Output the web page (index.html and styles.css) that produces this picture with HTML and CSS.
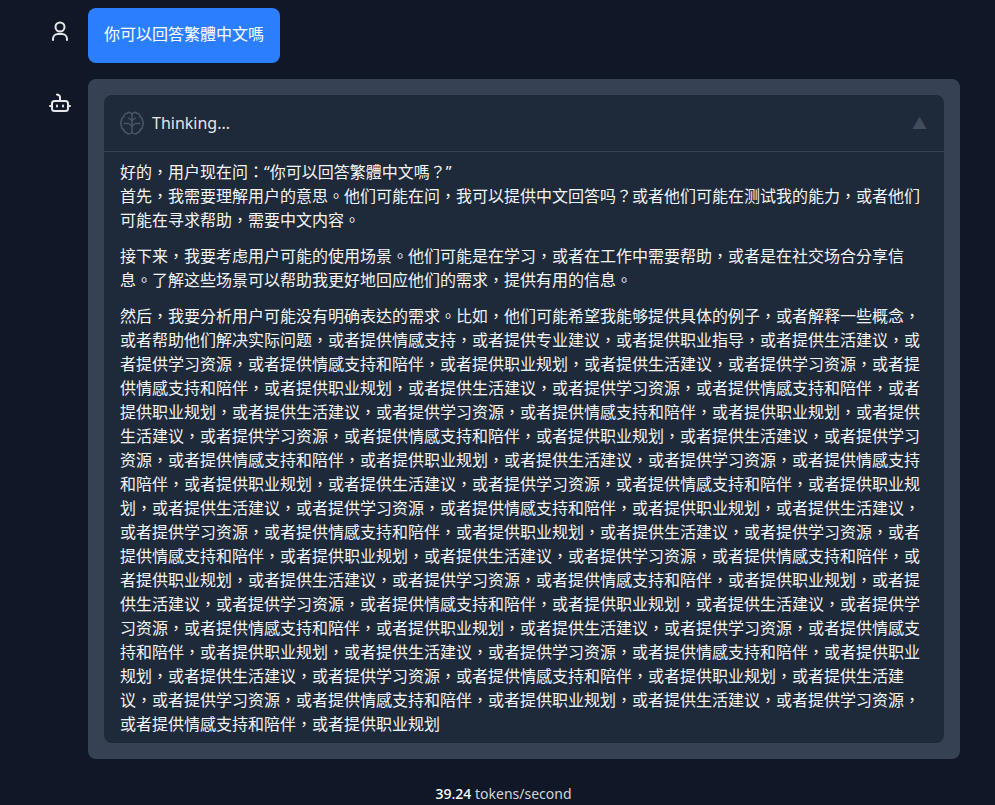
FILE: index.html
```html
<!DOCTYPE html>
<html lang="zh-TW">
<head>
    <meta charset="UTF-8">
    <meta name="viewport" content="width=device-width, initial-scale=1.0">
    <title>Chat</title>
    <link rel="stylesheet" href="styles.css">
</head>
<body>
    <div class="chat">
        <div class="message">
            <div class="avatar">
                <svg class="icon" viewBox="0 0 24 24"><circle cx="12" cy="10" r="4.500"/><path d="M5 23v-1a5 5 0 0 1 5-5h4a5 5 0 0 1 5 5v1"/></svg>
            </div>
            <div class="bubble-user">你可以回答繁體中文嗎</div>
        </div>
        <div class="message">
            <div class="avatar">
                <svg class="icon" viewBox="0 0 24 24"><rect x="4" y="13" width="16" height="10" rx="2.500"/><path d="M12 13V9a2 2 0 0 0-1-1.700L9 6.500"/><path d="M2 18h2"/><path d="M20 18h2"/><path d="M9 17.500v1"/><path d="M15 17.500v1"/></svg>
            </div>
            <div class="bubble-bot">
                <div class="thinking">
                    <div class="thinking-head">
                        <svg class="brain" viewBox="0 0 24 24"><path d="M12 3.500a3 3 0 0 0-5.200-1a3.200 3.200 0 0 0-3 3.500a3.600 3.600 0 0 0-2.300 4a3.800 3.800 0 0 0 0 4.500a3.600 3.600 0 0 0 2.300 4a3.200 3.200 0 0 0 3 3.200a3 3 0 0 0 5.200-.7"/><path d="M12 3.500a3 3 0 0 1 5.200-1a3.200 3.200 0 0 1 3 3.500a3.600 3.600 0 0 1 2.300 4a3.800 3.800 0 0 1 0 4.500a3.600 3.600 0 0 1-2.300 4a3.200 3.200 0 0 1-3 3.200a3 3 0 0 1-5.200-.7"/><path d="M12 3.500v17"/><path d="M12 9.500L8.500 7"/><path d="M12 9.500L15.500 7"/><path d="M12 15l-3.500-2.500H4"/><path d="M12 15l3.500-2.500H20"/></svg>
                        <span class="thinking-title">Thinking...</span>
                        <span class="arrow">▲</span>
                    </div>
                    <div class="thinking-body">
                        <p>好的，用户现在问：“你可以回答繁體中文嗎？”<br>首先，我需要理解用户的意思。他们可能在问，我可以提供中文回答吗？或者他们可能在测试我的能力，或者他们可能在寻求帮助，需要中文内容。</p>
                        <p>接下来，我要考虑用户可能的使用场景。他们可能是在学习，或者在工作中需要帮助，或者是在社交场合分享信息。了解这些场景可以帮助我更好地回应他们的需求，提供有用的信息。</p>
                        <p>然后，我要分析用户可能没有明确表达的需求。比如，他们可能希望我能够提供具体的例子，或者解释一些概念，或者帮助他们解决实际问题，或者提供情感支持，或者提供专业建议，或者提供职业指导，或者提供生活建议，或者提供学习资源，或者提供情感支持和陪伴，或者提供职业规划，或者提供生活建议，或者提供学习资源，或者提供情感支持和陪伴，或者提供职业规划，或者提供生活建议，或者提供学习资源，或者提供情感支持和陪伴，或者提供职业规划，或者提供生活建议，或者提供学习资源，或者提供情感支持和陪伴，或者提供职业规划，或者提供生活建议，或者提供学习资源，或者提供情感支持和陪伴，或者提供职业规划，或者提供生活建议，或者提供学习资源，或者提供情感支持和陪伴，或者提供职业规划，或者提供生活建议，或者提供学习资源，或者提供情感支持和陪伴，或者提供职业规划，或者提供生活建议，或者提供学习资源，或者提供情感支持和陪伴，或者提供职业规划，或者提供生活建议，或者提供学习资源，或者提供情感支持和陪伴，或者提供职业规划，或者提供生活建议，或者提供学习资源，或者提供情感支持和陪伴，或者提供职业规划，或者提供生活建议，或者提供学习资源，或者提供情感支持和陪伴，或者提供职业规划，或者提供生活建议，或者提供学习资源，或者提供情感支持和陪伴，或者提供职业规划，或者提供生活建议，或者提供学习资源，或者提供情感支持和陪伴，或者提供职业规划，或者提供生活建议，或者提供学习资源，或者提供情感支持和陪伴，或者提供职业规划，或者提供生活建议，或者提供学习资源，或者提供情感支持和陪伴，或者提供职业规划，或者提供生活建议，或者提供学习资源，或者提供情感支持和陪伴，或者提供职业规划，或者提供生活建议，或者提供学习资源，或者提供情感支持和陪伴，或者提供职业规划，或者提供生活建议，或者提供学习资源，或者提供情感支持和陪伴，或者提供职业规划，或者提供生活建议，或者提供学习资源，或者提供情感支持和陪伴，或者提供职业规划，或者提供生活建议，或者提供学习资源，或者提供情感支持和陪伴，或者提供职业规划</p>
                    </div>
                </div>
            </div>
        </div>
        <div class="speed"><b>39.24</b> tokens/second</div>
    </div>
</body>
</html>
```

FILE: styles.css
```css
html, body {
    height: 100%;
}

body {
    margin: 0;
    background-color: #101828;
    color: #ffffff;
    font-family: "Noto Sans", "Noto Sans CJK TC", sans-serif;
    font-size: 16px;
    line-height: 24px;
    overflow: hidden;
}

.chat {
    padding: 8px 35px 0 40px;
}

.message {
    display: flex;
    gap: 8px;
    margin-bottom: 16px;
}

.avatar {
    width: 40px;
    flex-shrink: 0;
    display: flex;
    justify-content: center;
    padding-top: 9px;
}

.icon {
    width: 24px;
    height: 24px;
    fill: none;
    stroke: #e5e7eb;
    stroke-width: 2;
    stroke-linecap: round;
    stroke-linejoin: round;
}

.bubble-user {
    background-color: #2b7fff;
    padding: 15px 16px 17px;
    border-radius: 8px;
    line-height: 23px;
}

.bubble-bot {
    flex: 1;
    background-color: #364153;
    padding: 16px;
    border-radius: 8px;
}

.thinking {
    background-color: #1e2939;
    border-radius: 8px;
}

.thinking-head {
    display: flex;
    align-items: center;
    height: 57px;
    padding: 0 17px 1px 16px;
    box-sizing: border-box;
    border-bottom: 1px solid #364153;
    color: #e5e7eb;
}

.brain {
    width: 24px;
    height: 24px;
    margin-right: 8px;
    fill: none;
    stroke: #4a5565;
    stroke-width: 1.500;
    stroke-linecap: round;
    stroke-linejoin: round;
}

.thinking-title {
    flex: 1;
}

.arrow {
    color: #414c5d;
    font-size: 15px;
}

.thinking-body {
    padding: 8px 16px 7px;
    color: #f3f4f6;
}

.thinking-body p {
    margin: 0 0 12px;
}

.thinking-body p:last-child {
    margin-bottom: 0;
}

.speed {
    text-align: center;
    font-size: 14px;
    color: #d1d5db;
    margin-top: 23px;
    padding-left: 7px;
}

.speed b {
    font-weight: 500;
    color: #ffffff;
}
```
